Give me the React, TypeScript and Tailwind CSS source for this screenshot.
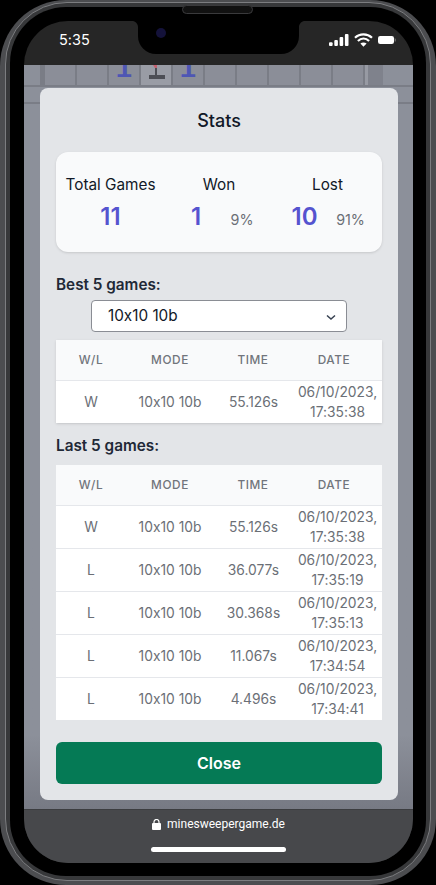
import React from "react";

const best = [["W", "10x10 10b", "55.126s", "06/10/2023,", "17:35:38"]];
const last = [
  ["W", "10x10 10b", "55.126s", "06/10/2023,", "17:35:38"],
  ["L", "10x10 10b", "36.077s", "06/10/2023,", "17:35:19"],
  ["L", "10x10 10b", "30.368s", "06/10/2023,", "17:35:13"],
  ["L", "10x10 10b", "11.067s", "06/10/2023,", "17:34:54"],
  ["L", "10x10 10b", "4.496s", "06/10/2023,", "17:34:41"],
];

function GamesTable({ rows }: { rows: string[][] }) {
  return (
    <table className="w-full table-fixed border-collapse bg-white text-center text-[13.8px] text-[#6b6f76]">
      <colgroup>
        <col className="w-[70px]" />
        <col className="w-[88px]" />
        <col className="w-[79px]" />
        <col className="w-[89px]" />
      </colgroup>
      <thead className="bg-[#f9fafb] text-[11.8px] tracking-[0.6px] text-[#71757c]">
        <tr className="h-[40px] border-b border-[#e5e7eb]">
          <th className="pt-[2px] font-medium">W/L</th>
          <th className="pt-[2px] font-medium">MODE</th>
          <th className="pt-[2px] pr-[1px] font-medium">TIME</th>
          <th className="pt-[2px] pr-[7px] font-medium">DATE</th>
        </tr>
      </thead>
      <tbody>
        {rows.map((r, i) => (
          <tr key={i} className={`h-[43px] ${i < rows.length - 1 ? "border-b border-[#e5e7eb]" : ""}`}>
            <td className="pt-[2px]">{r[0]}</td>
            <td className="pt-[2px]">{r[1]}</td>
            <td className="pt-[2px]">{r[2]}</td>
            <td className="pt-[1px] leading-5">
              {r[3]}
              <br />
              {r[4]}
            </td>
          </tr>
        ))}
      </tbody>
    </table>
  );
}

function Stat({ label, value, pct, cls }: { label: string; value: string; pct?: string; cls: string }) {
  return (
    <div className={`flex flex-col items-center pt-[1px] ${cls}`}>
      <div className="text-center text-[15.3px] leading-6 text-[#111827]">{label}</div>
      <div className={`mt-[4px] grid items-baseline justify-items-center ${pct ? "w-[92px] grid-cols-2" : ""}`}>
        <span className="text-2xl leading-8 font-semibold text-[#5553cf]">{value}</span>
        {pct && <span className="text-[14.3px] text-[#6b6f76]">{pct}</span>}
      </div>
    </div>
  );
}

function Signal() {
  return (
    <svg width="20" height="12" viewBox="0 0 20 12" fill="white">
      <rect x="0" y="8.2" width="3.6" height="3.8" rx="1" />
      <rect x="5.3" y="6" width="3.6" height="6" rx="1" />
      <rect x="10.6" y="3" width="3.6" height="9" rx="1" />
      <rect x="15.9" y="0" width="3.6" height="12" rx="1" />
    </svg>
  );
}

function Wifi() {
  return (
    <svg width="19" height="14" viewBox="0 0 19 14" fill="none" stroke="white" strokeWidth="2.2">
      <path d="M1 4.8C5.8 0.2 13.2 0.2 18 4.8" />
      <path d="M3.9 8C7.2 4.9 11.8 4.9 15.1 8" />
      <path d="M9.5 13.8L6.4 10.6C8.3 9 10.7 9 12.6 10.6Z" fill="white" stroke="none" />
    </svg>
  );
}

function Battery() {
  return (
    <svg width="18" height="8" viewBox="0 0 18 8" fill="white">
      <rect x="0" y="0" width="16" height="8" rx="2.2" />
      <rect x="16.6" y="2.5" width="1.2" height="3" rx="0.6" fill="#777" />
    </svg>
  );
}

function NotchCorner({ flip }: { flip?: boolean }) {
  return (
    <svg width="6" height="6" viewBox="0 0 6 6" fill="black" className={`absolute top-0 ${flip ? "right-[-6px] -scale-x-100" : "left-[-6px]"}`}>
      <path d="M6 0H0C3.3 0 6 2.7 6 6Z" />
    </svg>
  );
}

function Cell({ n, flag }: { n?: string; flag?: boolean }) {
  return (
    <div
      className={`relative flex h-[20px] w-[32px] justify-center overflow-hidden border-r-[2px] border-[#7a7d86] ${flag ? "bg-[#999ca5]" : "bg-[#8b8e98]"}`}
    >
      {n && (
        <span
          className="mt-[-10px] text-[28px] leading-[30px] font-bold text-[#4e56b4]"
          style={{ fontFamily: "'Liberation Mono', monospace" }}
        >
          {n}
        </span>
      )}
      {flag && (
        <svg width="20" height="18" viewBox="0 0 20 18" className="absolute top-0 left-[5px]">
          <path d="M7 0H11V3H9Z" fill="#c3616f" />
          <rect x="9" y="3" width="2" height="8" fill="#4c4e55" />
          <rect x="3" y="10" width="16" height="4" fill="#4c4e55" />
        </svg>
      )}
    </div>
  );
}

export default function App() {
  return (
    <div
      className="h-[885px] w-[436px] overflow-hidden bg-black [font-feature-settings:'calt'_0]"
      style={{ fontFamily: "Inter, 'Liberation Sans', sans-serif" }}
    >
      <div className="h-full w-full rounded-[66px] bg-[#4c4d50] px-[5px] pt-[2px] pb-[4px]">
        <div className="relative h-full w-full rounded-[62px] border border-[#7c7d80] bg-[#37383a] px-[4px] pt-[4px] pb-[4px]">
          <div className="absolute top-[2px] left-[176px] h-[9px] w-[71px] rounded-full border border-[#3a3a3c] bg-[#111]" />
          <div className="h-full w-full rounded-[56px] bg-black px-[14px] pt-[14px]">
            <div className="flex h-[842px] w-[389px] flex-col overflow-hidden rounded-[44px] bg-[#262626]">
              <div className="relative flex h-[44px] shrink-0 items-center justify-between pr-[17px] pb-[6px] pl-[35px] text-white">
                <span className="text-[14.5px]">5:35</span>
                <div className="absolute top-0 left-[114px] flex h-[33px] w-[161px] items-start rounded-b-[18px] bg-black pt-[7px] pl-[18px]">
                  <NotchCorner />
                  <NotchCorner flip />
                  <div className="h-[10px] w-[10px] rounded-full bg-[#14123a]" />
                </div>
                <div className="flex items-center gap-[5px]">
                  <Signal />
                  <Wifi />
                  <Battery />
                </div>
              </div>
              <div className="relative flex-1 bg-linear-to-b from-[#8c909a] from-90% to-[#777a84]">
                <div className="flex border-b-[2px] border-[#7a7d86] pl-[16px]">
                  <div className="h-[20px] w-[5px] bg-[#7a7d86]" />
                  <Cell />
                  <Cell />
                  <Cell n="1" />
                  <Cell flag />
                  <Cell n="1" />
                  <Cell />
                  <Cell />
                  <Cell />
                  <Cell />
                  <Cell />
                  <div className="h-[20px] w-[3px] bg-[#979aa3]" />
                  <div className="h-[20px] w-[15px] bg-[#7f828c]" />
                </div>
                <div className="mt-[15px] h-[2px] bg-[#7a7d86]" />
                <div className="absolute top-[23px] left-[16px] flex h-[712px] w-[358px] flex-col rounded-lg bg-[#e3e5e8] px-[16px] pt-[21px]">
                  <h2 className="text-center text-lg leading-[24px] font-medium text-[#111827]">Stats</h2>
                  <div className="mt-[19px] flex h-[100px] shrink-0 items-center rounded-xl bg-[#f9fafb] shadow-sm">
                    <Stat label="Total Games" value="11" cls="w-[109px]" />
                    <Stat label="Won" value="1" pct="9%" cls="w-[108px]" />
                    <Stat label="Lost" value="10" pct="91%" cls="w-[109px]" />
                  </div>
                  <div className="mt-[23px] text-[15.3px] leading-5 font-semibold text-[#1f2937]">Best 5 games:</div>
                  <div className="mt-[5px] flex justify-center">
                    <div className="flex h-[32px] w-[256px] items-center justify-between rounded border border-[#8a8d94] bg-white pt-[1px] pr-[9px] pl-[16px] text-[15.3px] text-[#111827]">
                      <span>10x10 10b</span>
                      <svg width="12" height="12" viewBox="0 0 12 12" fill="none" stroke="#374151" strokeWidth="1.5">
                        <path d="M2 4.5L6 8L10 4.5" />
                      </svg>
                    </div>
                  </div>
                  <div className="mt-[8px] shadow-sm">
                    <GamesTable rows={best} />
                  </div>
                  <div className="mt-[13px] text-[15.3px] leading-5 font-semibold text-[#1f2937]">Last 5 games:</div>
                  <div className="mt-[9px]">
                    <GamesTable rows={last} />
                  </div>
                  <button className="mt-[22px] h-[42px] rounded-md bg-[#057a55] text-base font-semibold text-white">
                    Close
                  </button>
                </div>
              </div>
              <div className="flex h-[54px] shrink-0 flex-col items-center border-t border-[#3c3d40] bg-[#47484b] pt-[6px]">
                <div className="flex items-center gap-[6px] text-xs text-white" style={{ fontFamily: "Roboto, sans-serif" }}>
                  <svg width="9" height="11" viewBox="0 0 9 11" fill="white">
                    <rect x="0" y="4" width="9" height="7" rx="1" />
                    <path d="M2 4.5V3a2.5 2.5 0 0 1 5 0v1.5" fill="none" stroke="white" strokeWidth="1.2" />
                  </svg>
                  minesweepergame.de
                </div>
                <div className="mt-[15px] h-[5px] w-[135px] rounded-full bg-white" />
              </div>
            </div>
          </div>
        </div>
      </div>
    </div>
  );
}
